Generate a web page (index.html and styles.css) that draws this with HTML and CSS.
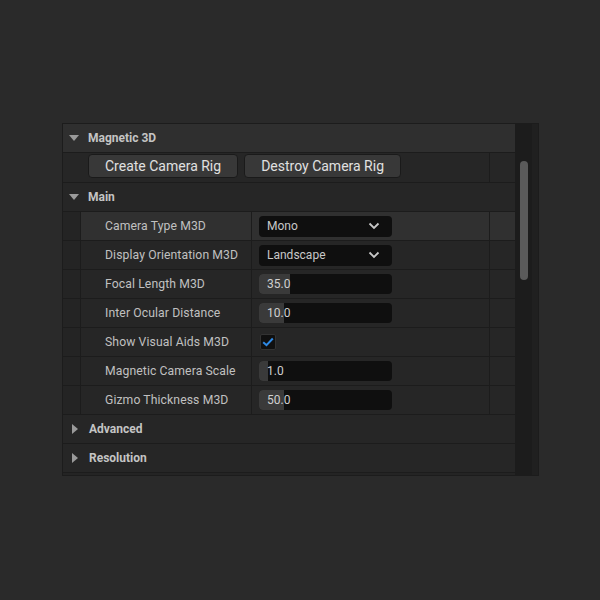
FILE: index.html
```html
<!DOCTYPE html>
<html lang="en">
<head>
    <meta charset="UTF-8">
    <title>Magnetic 3D Details</title>
    <link rel="stylesheet" href="styles.css">
</head>
<body>
    <div class="panel">
        <div class="details">
            <div class="category top">
                <span class="arrow down"></span>
                <span class="cat-name">Magnetic 3D</span>
            </div>

            <div class="button-row">
                <div class="buttons">
                    <button type="button">Create Camera Rig</button>
                    <button type="button">Destroy Camera Rig</button>
                </div>
                <div class="reset"></div>
            </div>

            <div class="category">
                <span class="arrow down"></span>
                <span class="cat-name">Main</span>
            </div>

            <div class="prop hover">
                <div class="indent"></div>
                <div class="name">Camera Type M3D</div>
                <div class="value">
                    <div class="combo">
                        <span>Mono</span>
                        <svg class="chevron" width="12" height="8" viewBox="0 0 12 8"><path d="M1.5 1.5 L6 6 L10.5 1.5" fill="none" stroke="#c8c8c8" stroke-width="1.8"/></svg>
                    </div>
                </div>
                <div class="reset"></div>
            </div>

            <div class="prop">
                <div class="indent"></div>
                <div class="name">Display Orientation M3D</div>
                <div class="value">
                    <div class="combo">
                        <span>Landscape</span>
                        <svg class="chevron" width="12" height="8" viewBox="0 0 12 8"><path d="M1.5 1.5 L6 6 L10.5 1.5" fill="none" stroke="#c8c8c8" stroke-width="1.8"/></svg>
                    </div>
                </div>
                <div class="reset"></div>
            </div>

            <div class="prop">
                <div class="indent"></div>
                <div class="name">Focal Length M3D</div>
                <div class="value">
                    <div class="number"><div class="fill" style="width: 31px"></div><span>35.0</span></div>
                </div>
                <div class="reset"></div>
            </div>

            <div class="prop">
                <div class="indent"></div>
                <div class="name">Inter Ocular Distance</div>
                <div class="value">
                    <div class="number"><div class="fill" style="width: 25px"></div><span>10.0</span></div>
                </div>
                <div class="reset"></div>
            </div>

            <div class="prop">
                <div class="indent"></div>
                <div class="name">Show Visual Aids M3D</div>
                <div class="value">
                    <div class="checkbox">
                        <svg width="12" height="10" viewBox="0 0 12 10"><path d="M1.2 5.2 L4.5 8.2 L10.8 1.5" fill="none" stroke="#2e8ae6" stroke-width="2"/></svg>
                    </div>
                </div>
                <div class="reset"></div>
            </div>

            <div class="prop">
                <div class="indent"></div>
                <div class="name">Magnetic Camera Scale</div>
                <div class="value">
                    <div class="number"><div class="fill" style="width: 9px"></div><span>1.0</span></div>
                </div>
                <div class="reset"></div>
            </div>

            <div class="prop">
                <div class="indent"></div>
                <div class="name">Gizmo Thickness M3D</div>
                <div class="value">
                    <div class="number"><div class="fill" style="width: 25px"></div><span>50.0</span></div>
                </div>
                <div class="reset"></div>
            </div>

            <div class="category">
                <span class="arrow right"></span>
                <span class="cat-name">Advanced</span>
            </div>

            <div class="category">
                <span class="arrow right"></span>
                <span class="cat-name">Resolution</span>
            </div>
        </div>

        <div class="scrollbar">
            <div class="thumb"></div>
        </div>
    </div>
</body>
</html>
```

FILE: styles.css
```css
body {
    margin: 0;
    padding: 123px 0 0 62px;
    background-color: #2a2a2a;
    font-family: Roboto, 'Liberation Sans', sans-serif;
    color: #c0c0c0;
    font-size: 12px;
}

.panel {
    display: flex;
    width: 477px;
    height: 353px;
    background-color: #242424;
    border: 1px solid #1c1c1c;
    box-sizing: border-box;
}

.details {
    width: 453px;
    display: flex;
    flex-direction: column;
}

.category {
    height: 29px;
    display: flex;
    align-items: center;
    border-bottom: 1px solid #1c1c1c;
    box-sizing: border-box;
    background-color: #262626;
}

.category.top {
    background-color: #2f2f2f;
}

.cat-name {
    font-weight: bold;
    color: #c4c4c4;
    font-size: 12px;
}

.arrow {
    width: 0;
    height: 0;
    margin-left: 6px;
    margin-right: 9px;
}

.arrow.down {
    border-left: 5px solid transparent;
    border-right: 5px solid transparent;
    border-top: 6px solid #9a9a9a;
}

.arrow.right {
    margin-left: 9px;
    margin-right: 11px;
    border-top: 5px solid transparent;
    border-bottom: 5px solid transparent;
    border-left: 6px solid #9a9a9a;
}

.button-row {
    height: 30px;
    display: flex;
    border-bottom: 1px solid #1c1c1c;
    box-sizing: border-box;
    background-color: #262626;
}

.buttons {
    flex: 1;
    display: flex;
    align-items: flex-start;
    gap: 6px;
    padding: 1px 0 0 25px;
}

.buttons button {
    height: 24px;
    padding: 0 16px;
    background-color: #383838;
    border: 1px solid #1a1a1a;
    border-radius: 4px;
    color: #e0e0e0;
    font-family: Roboto, 'Liberation Sans', sans-serif;
    font-size: 14px;
}

.reset {
    width: 25px;
    border-left: 1px solid #1c1c1c;
}

.prop {
    height: 29px;
    display: flex;
    border-bottom: 1px solid #1c1c1c;
    box-sizing: border-box;
    background-color: #262626;
}

.prop.hover {
    background-color: #303030;
}

.indent {
    width: 17px;
    background-color: #242424;
    border-right: 1px solid #1c1c1c;
}

.name {
    width: 146px;
    padding-left: 24px;
    display: flex;
    align-items: center;
    border-right: 1px solid #1c1c1c;
    font-size: 12.2px;
    letter-spacing: 0.1px;
}

.value {
    flex: 1;
    display: flex;
    align-items: center;
    padding-left: 7px;
}

.combo {
    width: 133px;
    height: 21px;
    background-color: #0f0f0f;
    border-radius: 4px;
    display: flex;
    align-items: center;
    justify-content: space-between;
    padding: 0 12px 0 8px;
    box-sizing: border-box;
    color: #c8c8c8;
}

.number {
    position: relative;
    width: 133px;
    height: 20px;
    background-color: #0f0f0f;
    border-radius: 4px;
    display: flex;
    align-items: center;
    color: #d0d0d0;
}

.number .fill {
    position: absolute;
    left: 0;
    top: 0;
    bottom: 0;
    background-color: #3a3a3a;
    border-radius: 4px 0 0 4px;
}

.number span {
    position: relative;
    padding-left: 8px;
}

.checkbox {
    width: 16px;
    height: 16px;
    margin-left: 1px;
    background-color: #101010;
    border: 1px solid #333;
    border-radius: 2px;
    display: flex;
    align-items: center;
    justify-content: center;
    box-sizing: border-box;
}

.scrollbar {
    width: 17px;
    background-color: #1c1c1c;
    border-right: 6px solid #202020;
    padding-top: 37px;
    display: flex;
    justify-content: center;
}

.thumb {
    width: 8px;
    height: 119px;
    border-radius: 4px;
    background-color: #5a5a5a;
}
```
